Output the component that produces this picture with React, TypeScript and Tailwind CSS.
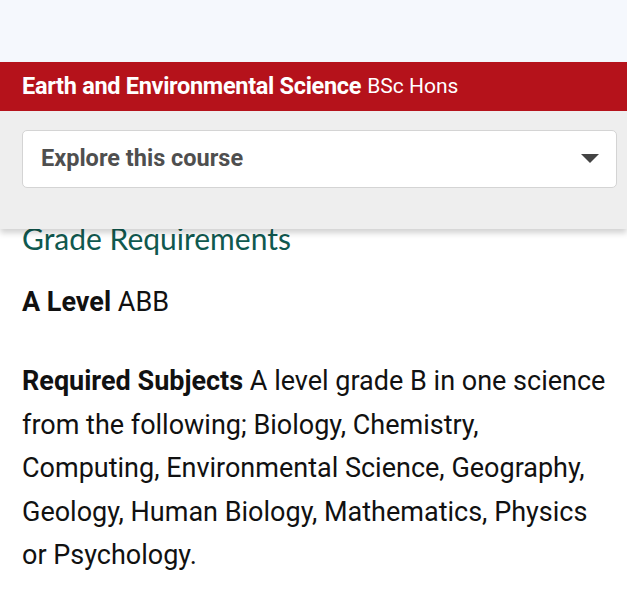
export default function App() {
  return (
    <div className="min-h-[600px] bg-white font-['Roboto',sans-serif] overflow-hidden">
      <div className="h-[62px] bg-[#f5f8fd]" />
      <div className="relative z-10 shadow-[0_4px_6px_rgba(0,0,0,0.18)]">
        <div className="h-[49px] bg-[#b5121b] flex items-center px-[22px] text-white">
          <span className="text-[23.5px] font-bold tracking-[-0.3px]">Earth and Environmental Science</span>
          <span className="text-[21px] ml-[6px]">BSc Hons</span>
        </div>
        <div className="bg-[#eeeeee] pt-[19px] pb-[41px] pl-[22px] pr-[10px]">
          <div className="h-[58px] bg-white border border-[#d4d4d4] rounded-[5px] flex items-center justify-between pl-[18px] pr-[17px]">
            <span className="text-[23.5px] font-bold text-[#4f4f4f]">Explore this course</span>
            <svg width="18" height="10" viewBox="0 0 18 10">
              <path d="M0 0h18L9 9z" fill="#444" />
            </svg>
          </div>
        </div>
      </div>
      <div className="pl-[22px] pr-[15px] -mt-[11px]">
        <h2 className="font-['Lato',sans-serif] text-[30px] leading-[40px] text-[#10594f]">Grade Requirements</h2>
        <p className="mt-[24px] text-[27px] leading-[40px] text-[#111]">
          <b>A Level</b> ABB
        </p>
        <p className="mt-[38px] text-[27px] leading-[43.5px] text-[#111]">
          <b>Required Subjects</b> A level grade B in one science from the following; Biology, Chemistry,
          Computing, Environmental Science, Geography, Geology, Human Biology, Mathematics, Physics or
          Psychology.
        </p>
      </div>
    </div>
  );
}
